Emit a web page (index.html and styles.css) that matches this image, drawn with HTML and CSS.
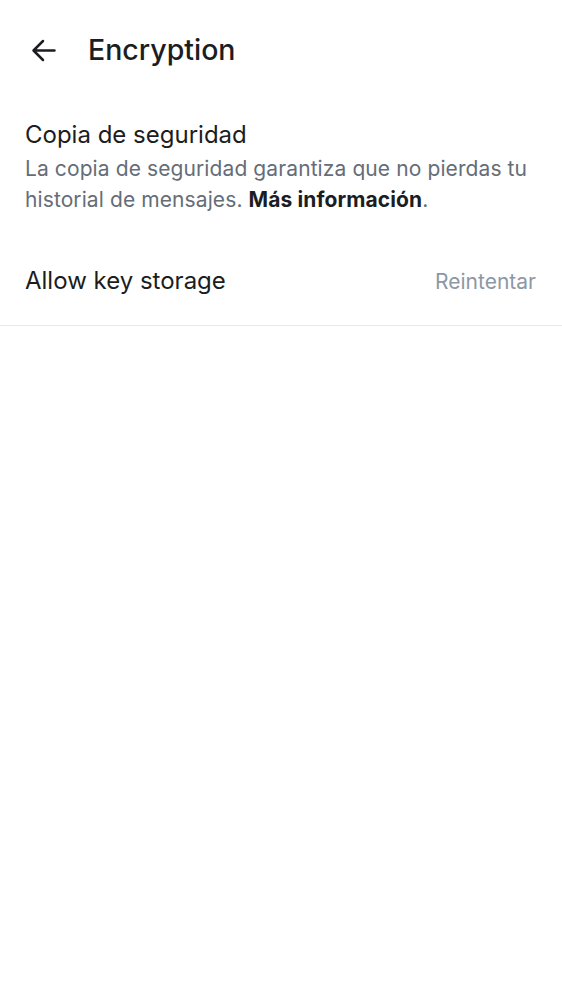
FILE: index.html
```html
<!DOCTYPE html>
<html>
<head>
<meta charset="utf-8">
<link rel="stylesheet" href="styles.css">
</head>
<body>
<header class="topbar">
  <button class="back" aria-label="Back">
    <svg width="25" height="23" viewBox="0 0 25 23"><path d="M23.5 11.5H2.5M12 2L2.5 11.5 12 21" fill="none" stroke="#1b1d22" stroke-width="2.5" stroke-linecap="round" stroke-linejoin="round"/></svg>
  </button>
  <h1 class="title">Encryption</h1>
</header>
<section class="backup">
  <div class="backup-title">Copia de seguridad</div>
  <p class="backup-desc">La copia de seguridad garantiza que no pierdas tu historial de mensajes. <b>Más información</b>.</p>
</section>
<div class="row">
  <span class="row-label">Allow key storage</span>
  <span class="row-action">Reintentar</span>
</div>
</body>
</html>
```
FILE: styles.css
```css
html, body { margin: 0; padding: 0; background: #fff; }
body { font-family: Inter, Roboto, sans-serif; color: #1b1d22; }
.topbar { display: flex; align-items: center; height: 100px; padding-left: 31px; box-sizing: border-box; }
.back { background: none; border: 0; padding: 0; width: 25px; height: 23px; display: flex; }
.title { margin: 0 0 0 32px; font-size: 28.5px; line-height: 36px; font-weight: 500; }
.backup { padding: 20px 25px 0 25px; }
.backup-title { font-size: 24px; line-height: 30px; }
.backup-desc { margin: 3px 0 0; font-size: 21px; line-height: 31px; color: #656d77; letter-spacing: 0.1px; }
.backup-desc b { color: #1b1d22; font-weight: 700; }
.row { display: flex; justify-content: space-between; align-items: baseline; padding: 51px 26px 28px 25px; border-bottom: 1px solid #e7e8eb; line-height: 30px; }
.row-label { font-size: 24px; }
.row-action { font-size: 21px; color: #8d97a5; }
```
